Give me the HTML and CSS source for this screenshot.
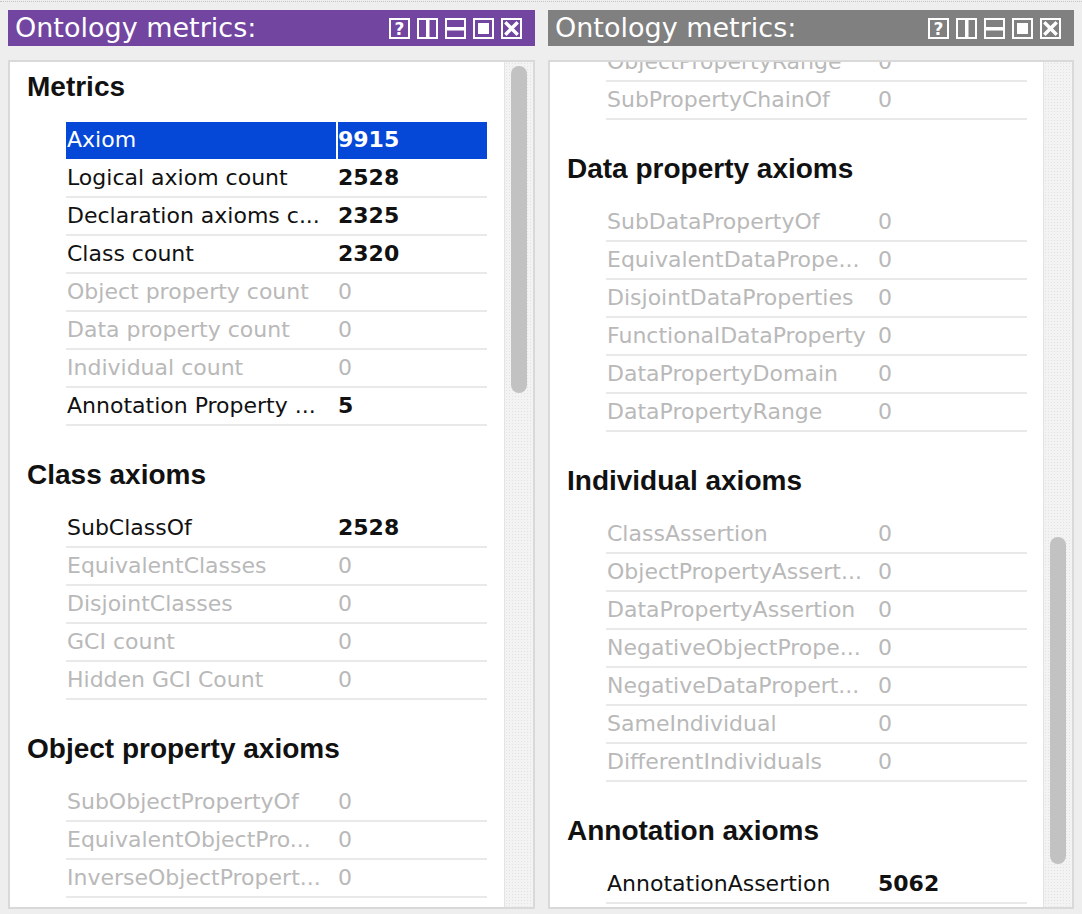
FILE: index.html
```html
<!DOCTYPE html>
<html>
<head>
<meta charset="utf-8">
<title>Ontology metrics</title>
<link rel="stylesheet" href="styles.css">
</head>
<body>
<div class="topline"></div>
<div class="views">
  <section class="view">
    <header class="titlebar active">
      <span class="title">Ontology metrics:</span>
      <div class="buttons">
        <svg class="btn" viewBox="0 0 21 21"><rect x="1" y="1" width="19" height="19" fill="none" stroke="#fff" stroke-width="2"/><text x="10.5" y="17" text-anchor="middle" class="q">?</text></svg>
        <svg class="btn" viewBox="0 0 21 21"><rect x="1" y="1" width="19" height="19" fill="none" stroke="#fff" stroke-width="2"/><rect x="9" y="1" width="3.5" height="19" fill="#fff"/></svg>
        <svg class="btn" viewBox="0 0 21 21"><rect x="1" y="1" width="19" height="19" fill="none" stroke="#fff" stroke-width="2"/><rect x="1" y="9" width="19" height="3.5" fill="#fff"/></svg>
        <svg class="btn" viewBox="0 0 21 21"><rect x="1" y="1" width="19" height="19" fill="none" stroke="#fff" stroke-width="2"/><rect x="5" y="5" width="11" height="11" fill="#fff"/></svg>
        <svg class="btn" viewBox="0 0 21 21"><rect x="1" y="1" width="19" height="19" fill="none" stroke="#fff" stroke-width="2"/><path d="M5.5 5.5 L15.5 15.5 M15.5 5.5 L5.5 15.5" stroke="#fff" stroke-width="3.4" stroke-linecap="square"/></svg>
      </div>
    </header>
    <div class="panel">
      <div class="content">
        <h2 class="heading">Metrics</h2>
        <div class="table">
          <div class="row selected"><span class="name">Axiom</span><span class="val">9915</span></div>
          <div class="row"><span class="name">Logical axiom count</span><span class="val">2528</span></div>
          <div class="row"><span class="name">Declaration axioms c...</span><span class="val">2325</span></div>
          <div class="row"><span class="name">Class count</span><span class="val">2320</span></div>
          <div class="row off"><span class="name">Object property count</span><span class="val">0</span></div>
          <div class="row off"><span class="name">Data property count</span><span class="val">0</span></div>
          <div class="row off"><span class="name">Individual count</span><span class="val">0</span></div>
          <div class="row"><span class="name">Annotation Property ...</span><span class="val">5</span></div>
        </div>
        <h2 class="heading">Class axioms</h2>
        <div class="table">
          <div class="row"><span class="name">SubClassOf</span><span class="val">2528</span></div>
          <div class="row off"><span class="name">EquivalentClasses</span><span class="val">0</span></div>
          <div class="row off"><span class="name">DisjointClasses</span><span class="val">0</span></div>
          <div class="row off"><span class="name">GCI count</span><span class="val">0</span></div>
          <div class="row off"><span class="name">Hidden GCI Count</span><span class="val">0</span></div>
        </div>
        <h2 class="heading">Object property axioms</h2>
        <div class="table">
          <div class="row off"><span class="name">SubObjectPropertyOf</span><span class="val">0</span></div>
          <div class="row off"><span class="name">EquivalentObjectPro...</span><span class="val">0</span></div>
          <div class="row off"><span class="name">InverseObjectPropert...</span><span class="val">0</span></div>
          <div class="row off"><span class="name">DisjointObjectProper...</span><span class="val">0</span></div>
        </div>
      </div>
      <div class="track"><div class="thumb thumb-top"></div></div>
    </div>
  </section>

  <section class="view">
    <header class="titlebar">
      <span class="title">Ontology metrics:</span>
      <div class="buttons">
        <svg class="btn" viewBox="0 0 21 21"><rect x="1" y="1" width="19" height="19" fill="none" stroke="#fff" stroke-width="2"/><text x="10.5" y="17" text-anchor="middle" class="q">?</text></svg>
        <svg class="btn" viewBox="0 0 21 21"><rect x="1" y="1" width="19" height="19" fill="none" stroke="#fff" stroke-width="2"/><rect x="9" y="1" width="3.5" height="19" fill="#fff"/></svg>
        <svg class="btn" viewBox="0 0 21 21"><rect x="1" y="1" width="19" height="19" fill="none" stroke="#fff" stroke-width="2"/><rect x="1" y="9" width="19" height="3.5" fill="#fff"/></svg>
        <svg class="btn" viewBox="0 0 21 21"><rect x="1" y="1" width="19" height="19" fill="none" stroke="#fff" stroke-width="2"/><rect x="5" y="5" width="11" height="11" fill="#fff"/></svg>
        <svg class="btn" viewBox="0 0 21 21"><rect x="1" y="1" width="19" height="19" fill="none" stroke="#fff" stroke-width="2"/><path d="M5.5 5.5 L15.5 15.5 M15.5 5.5 L5.5 15.5" stroke="#fff" stroke-width="3.4" stroke-linecap="square"/></svg>
      </div>
    </header>
    <div class="panel">
      <div class="content scrolled">
        <div class="table">
          <div class="row off"><span class="name">ObjectPropertyRange</span><span class="val">0</span></div>
          <div class="row off"><span class="name">SubPropertyChainOf</span><span class="val">0</span></div>
        </div>
        <h2 class="heading">Data property axioms</h2>
        <div class="table">
          <div class="row off"><span class="name">SubDataPropertyOf</span><span class="val">0</span></div>
          <div class="row off"><span class="name">EquivalentDataPrope...</span><span class="val">0</span></div>
          <div class="row off"><span class="name">DisjointDataProperties</span><span class="val">0</span></div>
          <div class="row off"><span class="name">FunctionalDataProperty</span><span class="val">0</span></div>
          <div class="row off"><span class="name">DataPropertyDomain</span><span class="val">0</span></div>
          <div class="row off"><span class="name">DataPropertyRange</span><span class="val">0</span></div>
        </div>
        <h2 class="heading">Individual axioms</h2>
        <div class="table">
          <div class="row off"><span class="name">ClassAssertion</span><span class="val">0</span></div>
          <div class="row off"><span class="name">ObjectPropertyAssert...</span><span class="val">0</span></div>
          <div class="row off"><span class="name">DataPropertyAssertion</span><span class="val">0</span></div>
          <div class="row off"><span class="name">NegativeObjectPrope...</span><span class="val">0</span></div>
          <div class="row off"><span class="name">NegativeDataPropert...</span><span class="val">0</span></div>
          <div class="row off"><span class="name">SameIndividual</span><span class="val">0</span></div>
          <div class="row off"><span class="name">DifferentIndividuals</span><span class="val">0</span></div>
        </div>
        <h2 class="heading">Annotation axioms</h2>
        <div class="table">
          <div class="row"><span class="name">AnnotationAssertion</span><span class="val">5062</span></div>
        </div>
      </div>
      <div class="track"><div class="thumb thumb-bottom"></div></div>
    </div>
  </section>
</div>
</body>
</html>
```

FILE: styles.css
```css
html, body {
  margin: 0;
  padding: 0;
}
body {
  background: #eeeeee;
  width: 1082px;
  height: 914px;
  overflow: hidden;
  font-family: "DejaVu Sans", "Liberation Sans", sans-serif;
}
.topline {
  height: 2px;
  border-top: 1px dotted #c4c4c4;
  box-sizing: border-box;
  margin-top: 1px;
}
.views {
  display: grid;
  grid-template-columns: 527px 526px;
  column-gap: 13px;
  padding: 7px 8px 0 8px;
}
.view {
  display: flex;
  flex-direction: column;
}
.titlebar {
  height: 36px;
  background: #808080;
  display: flex;
  align-items: center;
  justify-content: space-between;
  padding: 0 13px 0 7px;
  color: #fff;
}
.titlebar.active {
  background: #7245a0;
}
.title {
  font-family: "DejaVu Sans", sans-serif;
  font-size: 27px;
  line-height: 36px;
}
.buttons {
  display: flex;
  gap: 7px;
  padding-top: 1px;
}
.btn {
  width: 21px;
  height: 21px;
  display: block;
}
.q {
  fill: #fff;
  font-family: "DejaVu Sans", sans-serif;
  font-weight: bold;
  font-size: 17px;
}
.panel {
  margin-top: 14px;
  height: 849px;
  box-sizing: border-box;
  border: 2px solid #d9d9d9;
  background: #ffffff;
  display: flex;
  overflow: hidden;
}
.content {
  flex: 1;
  min-width: 0;
  padding: 8px 0 0 17px;
  overflow: hidden;
}
.content.scrolled {
  padding-top: 0;
  margin-top: -18px;
}
.heading {
  margin: 0 0 18px 0;
  font-family: "Liberation Sans", Arial, sans-serif;
  font-weight: bold;
  font-size: 28px;
  line-height: 34px;
  color: #111;
}
.table + .heading {
  margin-top: 32px;
}
.table {
  margin-left: 39px;
  width: 421px;
}
.row {
  display: grid;
  grid-template-columns: 270px 149px;
  column-gap: 2px;
  height: 38px;
  box-sizing: border-box;
  border-bottom: 2px solid #e9e9e9;
  font-size: 22px;
  line-height: 36px;
  color: #111;
}
.name {
  padding-left: 1px;
  white-space: nowrap;
  overflow: hidden;
}
.val {
  font-weight: bold;
  white-space: nowrap;
}
.row.off {
  color: #b9b9b9;
}
.row.off .val {
  font-weight: normal;
}
.row.selected {
  border-bottom-color: #fff;
  color: #fff;
}
.row.selected .name,
.row.selected .val {
  background: #0548d8;
  height: 37px;
}
.track {
  width: 29px;
  flex: 0 0 29px;
  box-sizing: border-box;
  background-color: #f3f3f3;
  background-image: radial-gradient(#e2e2e2 0.6px, transparent 0.8px);
  background-size: 3px 3px;
  border-left: 1px solid #e3e3e3;
  padding-left: 6px;
}
.thumb {
  width: 16px;
  border-radius: 8px;
  background: #c2c2c2;
}
.thumb-top {
  margin-top: 4px;
  height: 327px;
}
.thumb-bottom {
  margin-top: 475px;
  height: 327px;
}
```
